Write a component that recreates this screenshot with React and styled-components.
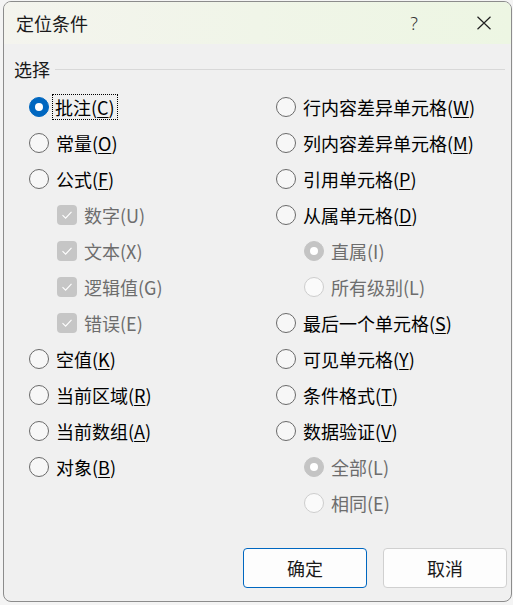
import styled, { createGlobalStyle } from 'styled-components';

const GlobalStyle = createGlobalStyle`
  html, body {
    margin: 0;
    padding: 0;
    background: #f4f4f4;
  }
  body {
    font-family: "Noto Sans CJK SC", "Noto Sans", sans-serif;
  }
`;

const leftItems = [
  { label: '批注', key: 'C', checked: true, focused: true },
  { label: '常量', key: 'O' },
  { label: '公式', key: 'F' },
  { label: '数字', key: 'U', box: true, disabled: true, indent: true },
  { label: '文本', key: 'X', box: true, disabled: true, indent: true },
  { label: '逻辑值', key: 'G', box: true, disabled: true, indent: true },
  { label: '错误', key: 'E', box: true, disabled: true, indent: true },
  { label: '空值', key: 'K' },
  { label: '当前区域', key: 'R' },
  { label: '当前数组', key: 'A' },
  { label: '对象', key: 'B' },
];

const rightItems = [
  { label: '行内容差异单元格', key: 'W' },
  { label: '列内容差异单元格', key: 'M' },
  { label: '引用单元格', key: 'P' },
  { label: '从属单元格', key: 'D' },
  { label: '直属', key: 'I', disabled: true, checked: true, indent: true },
  { label: '所有级别', key: 'L', disabled: true, indent: true },
  { label: '最后一个单元格', key: 'S' },
  { label: '可见单元格', key: 'Y' },
  { label: '条件格式', key: 'T' },
  { label: '数据验证', key: 'V' },
  { label: '全部', key: 'L', disabled: true, checked: true, indent: true },
  { label: '相同', key: 'E', disabled: true, indent: true },
];

function Option({ item }) {
  return (
    <Row $indent={item.indent}>
      {item.box ? (
        <CheckBox>
          <svg width="12" height="10" viewBox="0 0 12 10">
            <path d="M1.5 5.2 L4.6 8.2 L10.5 1.8" fill="none" stroke="#fff" strokeWidth="1.1" />
          </svg>
        </CheckBox>
      ) : (
        <Radio $checked={item.checked} $disabled={item.disabled} />
      )}
      <Label $disabled={item.disabled} $focused={item.focused}>
        {item.label}(
        {item.disabled ? item.key : <u>{item.key}</u>}
        )
      </Label>
    </Row>
  );
}

export default function App() {
  return (
    <>
      <GlobalStyle />
      <Window>
        <TitleBar>
          <Title>定位条件</Title>
          <TitleButtons>
            <HelpButton>?</HelpButton>
            <CloseButton>
              <svg width="16" height="14" viewBox="0 0 16 14">
                <path d="M1.5 0.8 L14.5 13.2 M14.5 0.8 L1.5 13.2" stroke="#222" strokeWidth="1.2" fill="none" />
              </svg>
            </CloseButton>
          </TitleButtons>
        </TitleBar>

        <Body>
          <GroupHeader>
            <span>选择</span>
            <GroupLine />
          </GroupHeader>

          <Columns>
            <Column>
              {leftItems.map((item, i) => <Option key={i} item={item} />)}
            </Column>
            <Column>
              {rightItems.map((item, i) => <Option key={i} item={item} />)}
            </Column>
          </Columns>

          <Footer>
            <Button $primary>确定</Button>
            <Button>取消</Button>
          </Footer>
        </Body>
      </Window>
    </>
  );
}

const Window = styled.div`
  margin: 1px 0 0 3px;
  width: 509px;
  height: 601px;
  box-sizing: border-box;
  border: 1px solid #8c8c8c;
  border-radius: 8px;
  background: #f0f0f0;
  overflow: hidden;
  display: flex;
  flex-direction: column;
`;

const TitleBar = styled.div`
  height: 42px;
  flex-shrink: 0;
  display: flex;
  align-items: center;
  padding: 0 4px 0 12px;
  background: linear-gradient(90deg, #f4f4ee 0%, #f0f5e8 50%, #edf6e3 100%);
`;

const Title = styled.div`
  font-size: 18px;
  color: #1a1a1a;
`;

const TitleButtons = styled.div`
  margin-left: auto;
  display: flex;
  align-items: center;
`;

const HelpButton = styled.div`
  width: 46px;
  margin-right: 24px;
  text-align: center;
  font-family: "Noto Sans", sans-serif;
  font-size: 18px;
  font-weight: 300;
  color: #333;
`;

const CloseButton = styled.div`
  width: 46px;
  height: 42px;
  display: flex;
  align-items: center;
  justify-content: center;
`;

const Body = styled.div`
  flex: 1;
  display: flex;
  flex-direction: column;
  padding: 15px 4px 13px 10px;
`;

const GroupHeader = styled.div`
  height: 20px;
  display: flex;
  align-items: center;
  gap: 5px;
  font-size: 18px;
  color: #1a1a1a;
`;

const GroupLine = styled.div`
  flex: 1;
  height: 1px;
  margin-right: 2px;
  background: #d8d8d8;
`;

const Columns = styled.div`
  margin-top: 10px;
  display: grid;
  grid-template-columns: 247px 1fr;
  padding-left: 15px;
  height: 432px;
`;

const Column = styled.div`
  display: flex;
  flex-direction: column;
`;

const Row = styled.div`
  height: 36px;
  display: flex;
  align-items: center;
  gap: 6px;
  padding-left: ${(p) => (p.$indent ? '28px' : '0')};
`;

const Radio = styled.span`
  width: 20px;
  height: 20px;
  box-sizing: border-box;
  border-radius: 50%;
  flex-shrink: 0;
  position: relative;
  border: 1px solid
    ${(p) => (p.$checked ? (p.$disabled ? '#c4c4c4' : '#0067c0') : p.$disabled ? '#cdcdcd' : '#6a6a6a')};
  background: ${(p) => (p.$checked ? (p.$disabled ? '#c4c4c4' : '#0067c0') : p.$disabled ? '#fafafa' : '#f7f7f7')};

  &::after {
    content: '';
    display: ${(p) => (p.$checked ? 'block' : 'none')};
    position: absolute;
    left: 50%;
    top: 50%;
    width: 8px;
    height: 8px;
    margin: -4px 0 0 -4px;
    border-radius: 50%;
    background: #fff;
  }
`;

const CheckBox = styled.span`
  width: 20px;
  height: 20px;
  flex-shrink: 0;
  border-radius: 4px;
  background: #c6c6c6;
  display: flex;
  align-items: center;
  justify-content: center;
`;

const Label = styled.span`
  font-size: 18px;
  line-height: 22px;
  padding: 1px 2px 1px 0;
  margin-left: ${(p) => (p.$focused ? '-3px' : '0')};
  padding-left: ${(p) => (p.$focused ? '2px' : '0')};
  color: ${(p) => (p.$disabled ? '#6d6d6d' : '#000')};
  border: 1px dotted ${(p) => (p.$focused ? '#000' : 'transparent')};
  white-space: nowrap;

  u {
    text-decoration-thickness: 1px;
    text-underline-offset: 2px;
  }
`;

const Footer = styled.div`
  margin-top: auto;
  display: flex;
  justify-content: flex-end;
  gap: 16px;
`;

const Button = styled.button`
  width: 124px;
  height: 40px;
  box-sizing: border-box;
  border-radius: 4px;
  background: #fdfdfd;
  border: 1px solid ${(p) => (p.$primary ? '#0067c0' : '#d0d0d0')};
  font-family: "Noto Sans CJK SC", sans-serif;
  font-size: 18px;
  color: #1a1a1a;
  padding: 0;
`;
